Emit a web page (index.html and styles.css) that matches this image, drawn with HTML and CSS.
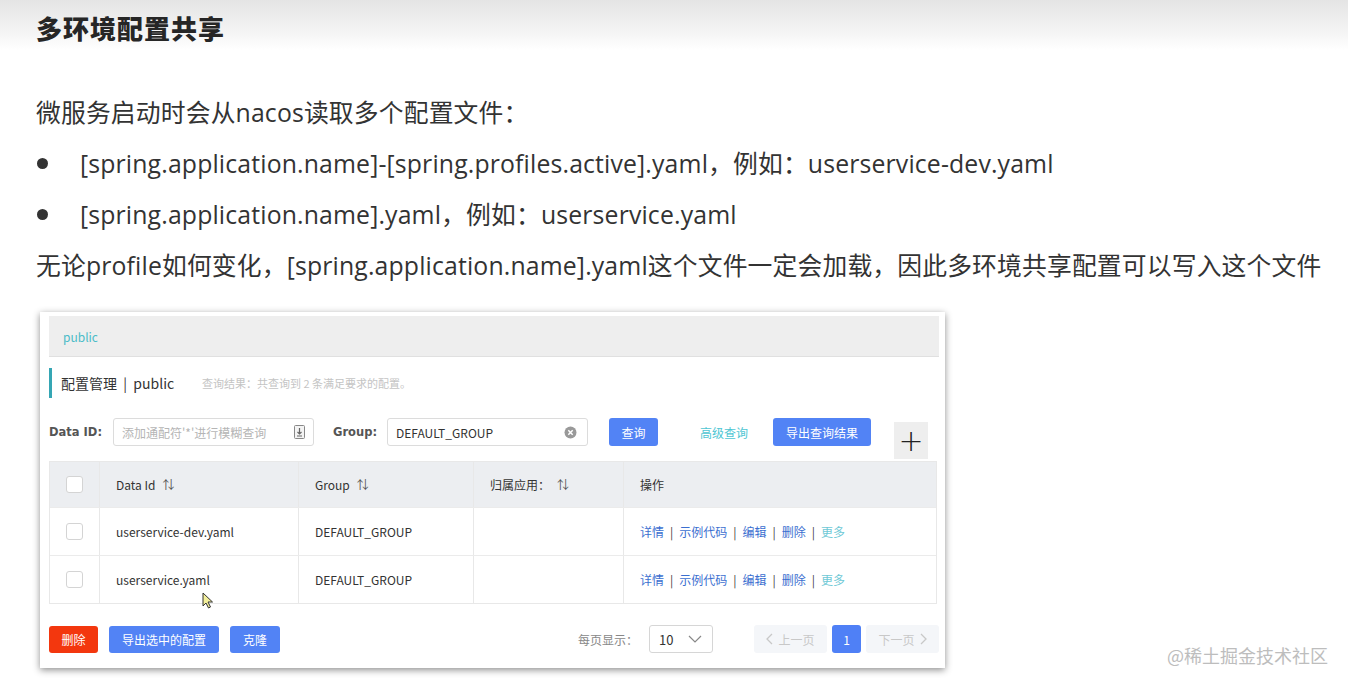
FILE: index.html
```html
<!DOCTYPE html>
<html lang="zh">
<head>
<meta charset="utf-8">
<title>多环境配置共享</title>
<link rel="stylesheet" href="styles.css">
</head>
<body>
<header class="slide-head">
  <h1 class="slide-title">多环境配置共享</h1>
</header>
<section class="slide-body">
  <p class="line">微服务启动时会从nacos读取多个配置文件：</p>
  <p class="line bullet"><span class="dot"></span>[spring.application.name]-[spring.profiles.active].yaml，例如：userservice-dev.yaml</p>
  <p class="line bullet"><span class="dot"></span>[spring.application.name].yaml，例如：userservice.yaml</p>
  <p class="line">无论profile如何变化，[spring.application.name].yaml这个文件一定会加载，因此多环境共享配置可以写入这个文件</p>
</section>

<div class="shot">
  <div class="ns-bar">public</div>
  <div class="title-row">
    <span class="title-mark"></span>
    <span class="title-text">配置管理&nbsp;&nbsp;|&nbsp;&nbsp;public</span>
    <span class="title-note">查询结果：共查询到 2 条满足要求的配置。</span>
  </div>
  <div class="search-row">
    <span class="lbl lbl-id">Data ID:</span>
    <div class="field field-id">
      <span class="ph">添加通配符'*'进行模糊查询</span>
      <svg class="fi" width="11" height="14" viewBox="0 0 11 14"><rect x="0.5" y="0.5" width="10" height="13" rx="1" fill="#f4f4f4" stroke="#888"/><path d="M5.5 3v6M3.5 7l2 2 2-2" stroke="#666" stroke-width="1.2" fill="none"/><path d="M3 11h5" stroke="#666"/></svg>
    </div>
    <span class="lbl lbl-group">Group:</span>
    <div class="field field-group">
      <span class="val">DEFAULT_GROUP</span>
      <svg class="fi" width="13" height="13" viewBox="0 0 13 13"><circle cx="6.5" cy="6.5" r="6" fill="#999"/><path d="M4.3 4.3l4.4 4.4M8.7 4.3l-4.4 4.4" stroke="#fff" stroke-width="1.5"/></svg>
    </div>
    <button class="btn btn-query">查询</button>
    <span class="adv">高级查询</span>
    <button class="btn btn-export">导出查询结果</button>
    <span class="plus">+</span>
  </div>

  <div class="table">
    <div class="tr th">
      <div class="td c-chk"><span class="chk"></span></div>
      <div class="td">Data Id <span class="sort">⇅</span></div>
      <div class="td">Group <span class="sort">⇅</span></div>
      <div class="td">归属应用： <span class="sort">⇅</span></div>
      <div class="td">操作</div>
    </div>
    <div class="tr">
      <div class="td c-chk"><span class="chk"></span></div>
      <div class="td">userservice-dev.yaml</div>
      <div class="td">DEFAULT_GROUP</div>
      <div class="td"></div>
      <div class="td ops"><a>详情</a><i>|</i><a>示例代码</a><i>|</i><a>编辑</a><i>|</i><a>删除</a><i>|</i><a class="more">更多</a></div>
    </div>
    <div class="tr">
      <div class="td c-chk"><span class="chk"></span></div>
      <div class="td">userservice.yaml</div>
      <div class="td">DEFAULT_GROUP</div>
      <div class="td"></div>
      <div class="td ops"><a>详情</a><i>|</i><a>示例代码</a><i>|</i><a>编辑</a><i>|</i><a>删除</a><i>|</i><a class="more">更多</a></div>
    </div>
    <svg class="cursor" width="12" height="17" viewBox="0 0 12 17"><path d="M1 1v13l3-3 2.5 5 2-1-2.5-5h4.5z" fill="#f3ef9a" stroke="#333" stroke-width="1"/></svg>
  </div>

  <div class="foot">
    <div class="foot-left">
      <button class="btn btn-del">删除</button>
      <button class="btn btn-exp2">导出选中的配置</button>
      <button class="btn btn-clone">克隆</button>
    </div>
    <div class="foot-right">
      <span class="per">每页显示：</span>
      <div class="select"><span>10</span><svg width="14" height="8" viewBox="0 0 14 8"><path d="M1 1l6 6 6-6" stroke="#888" stroke-width="1.2" fill="none"/></svg></div>
      <span class="pg pg-off"><svg class="chev" width="7" height="12" viewBox="0 0 7 12"><path d="M6 1L1 6l5 5" stroke="#c8c8c8" stroke-width="1.3" fill="none"/></svg>上一页</span>
      <span class="pg pg-on">1</span>
      <span class="pg pg-off">下一页<svg class="chev" width="7" height="12" viewBox="0 0 7 12"><path d="M1 1l5 5-5 5" stroke="#c8c8c8" stroke-width="1.3" fill="none"/></svg></span>
    </div>
  </div>
</div>

<div class="watermark">@稀土掘金技术社区</div>
</body>
</html>
```
FILE: styles.css
```css
html, body {
  margin: 0;
  padding: 0;
  background: #ffffff;
}
body {
  width: 1348px;
  height: 685px;
  overflow: hidden;
  position: relative;
  font-family: "Open Sans", "Noto Sans CJK SC", sans-serif;
  color: #333;
}
.slide-head {
  height: 50px;
  background: linear-gradient(180deg, #e4e4e4 0%, #f3f3f3 60%, #ffffff 100%);
  display: flex;
  align-items: center;
}
.slide-title {
  margin: 0 0 0 36px;
  font-family: "Noto Sans CJK SC", sans-serif;
  font-size: 26px;
  font-weight: 900;
  color: #262626;
  letter-spacing: 1px;
  padding-top: 4px;
}
.slide-body {
  margin-top: 37px;
  padding-left: 36px;
}
.line {
  margin: 0;
  height: 51px;
  line-height: 51px;
  font-size: 24.8px;
  letter-spacing: 0.15px;
  color: #333;
  white-space: nowrap;
  display: flex;
  align-items: center;
}
.dot {
  width: 11px;
  height: 11px;
  border-radius: 50%;
  background: #333;
  margin-left: 1px;
  margin-right: 32px;
  flex: none;
}

/* screenshot panel */
.shot {
  margin: 21px 0 0 40px;
  width: 896px;
  height: 352px;
  padding: 4px 0 0 9px;
  background: #fff;
  box-shadow: 0 2px 7px rgba(0,0,0,0.45);
  font-family: "Noto Sans CJK SC", sans-serif;
  font-size: 12px;
  color: #333;
  position: relative;
}
.ns-bar {
  width: 890px;
  height: 41px;
  background: #eeeeee;
  border-bottom: 1px solid #e0e0e0;
  box-sizing: border-box;
  padding-left: 14px;
  line-height: 41px;
  color: #4bbcc8;
  font-size: 12px;
}
.title-row {
  margin-top: 11px;
  height: 30px;
  display: flex;
  align-items: center;
}
.title-mark {
  width: 3px;
  height: 30px;
  background: #35a6b4;
  margin-right: 9px;
}
.title-text {
  font-size: 14px;
  color: #333;
  width: 141px;
}
.title-note {
  font-size: 11px;
  color: #c4c4c4;
}
.search-row {
  margin-top: 20px;
  height: 28px;
  display: flex;
  align-items: center;
  position: relative;
}
.lbl {
  font-family: "DejaVu Sans", sans-serif;
  font-weight: 700;
  font-size: 11.5px;
  color: #555;
}
.lbl-id { width: 64px; }
.lbl-group { width: 54px; margin-left: 19px; }
.field {
  height: 28px;
  width: 201px;
  box-sizing: border-box;
  border: 1px solid #dcdcdc;
  border-radius: 3px;
  display: flex;
  align-items: center;
  justify-content: space-between;
  padding: 0 8px 0 8px;
}
.ph { color: #b5b5b5; font-size: 12px; }
.val { color: #333; font-size: 12px; }
.field-group .fi { margin-right: 2px; }
.btn {
  border: none;
  border-radius: 3px;
  height: 28px;
  color: #fff;
  font-family: "Noto Sans CJK SC", sans-serif;
  font-size: 12px;
  padding: 0;
  background: #5283f5;
}
.btn-query { width: 49px; margin-left: 21px; }
.adv { color: #4ec6d3; margin-left: 42px; font-size: 12px; }
.btn-export { width: 98px; margin-left: 25px; }
.plus {
  position: absolute;
  left: 845px;
  top: 4px;
  width: 34px;
  height: 37px;
  background: #eeeeee;
  font-family: "DejaVu Sans", sans-serif;
  font-size: 30px;
  font-weight: 200;
  line-height: 37px;
  text-align: center;
  color: #222;
}

.table {
  margin-top: 15px;
  width: 888px;
  border: 1px solid #e8e8e8;
  box-sizing: border-box;
  position: relative;
}
.tr {
  display: grid;
  grid-template-columns: 49px 199px 175px 150px 1fr;
  height: 47px;
  border-top: 1px solid #ebebeb;
}
.tr.th {
  height: 45px;
  border-top: none;
  background: #eceef1;
}
.td {
  border-left: 1px solid #e8e8e8;
  display: flex;
  align-items: center;
  padding-left: 16px;
  color: #333;
  font-size: 12px;
  white-space: nowrap;
}
.td:first-child { border-left: none; }
.c-chk { padding-left: 16px; }
.chk {
  width: 15px;
  height: 15px;
  border: 1px solid #d4d4d4;
  border-radius: 3px;
  background: #fff;
}
.sort { margin-left: 7px; font-size: 12px; color: #555; }
.ops a { color: #3b6fd0; }
.ops a.more { color: #6fc9d6; }
.ops i { font-style: normal; color: #444; margin: 0 6px; }
.cursor {
  position: absolute;
  left: 152px;
  top: 130px;
}

.foot {
  margin-top: 21px;
  width: 890px;
  display: flex;
  justify-content: space-between;
  align-items: center;
}
.foot-left { display: flex; gap: 11px; }
.btn-del { width: 49px; height: 27px; background: #f3370e; }
.btn-exp2 { width: 110px; height: 27px; }
.btn-clone { width: 50px; height: 27px; }
.foot-right { display: flex; align-items: center; }
.per { color: #888; font-size: 12px; margin-right: 11px; margin-left: 6px; }
.select {
  width: 64px;
  height: 28px;
  box-sizing: border-box;
  border: 1px solid #d6d6d6;
  border-radius: 3px;
  display: flex;
  align-items: center;
  justify-content: space-between;
  padding: 0 10px 0 9px;
  font-size: 13px;
  color: #333;
  margin-right: 41px;
}
.pg {
  height: 28px;
  border-radius: 3px;
  font-size: 12px;
  display: flex;
  align-items: center;
  justify-content: center;
  gap: 5px;
}
.pg-off { width: 73px; background: #f4f6f9; color: #c8c8c8; }
.pg-on { width: 29px; background: #4f80f6; color: #fff; margin: 0 5px; }

.watermark {
  position: absolute;
  left: 1167px;
  top: 642px;
  font-family: "Noto Sans CJK SC", sans-serif;
  font-size: 18px;
  color: #bdbdbd;
}
```
